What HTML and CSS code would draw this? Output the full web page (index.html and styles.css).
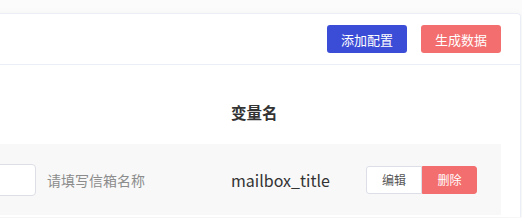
FILE: index.html
```html
<!DOCTYPE html>
<html lang="zh-CN">
  <head>
    <meta charset="UTF-8" />
    <meta name="viewport" content="width=device-width, initial-scale=1.0" />
    <title>变量配置</title>
    <link rel="stylesheet" href="styles.css">
  </head>
  <body>
    <div class="card">
      <div class="card-header">
        <button class="btn primary">添加配置</button>
        <button class="btn danger">生成数据</button>
      </div>
      <div class="card-body">
        <div class="row head">
          <div class="cell col-value"></div>
          <div class="cell col-name">变量名</div>
          <div class="cell col-ops"></div>
        </div>
        <div class="row item">
          <div class="cell col-value">
            <input type="text" class="input" />
            <span class="hint">请填写信箱名称</span>
          </div>
          <div class="cell col-name">mailbox_title</div>
          <div class="cell col-ops">
            <div class="btn-group">
              <button class="small">编辑</button>
              <button class="small remove">删除</button>
            </div>
          </div>
        </div>
      </div>
    </div>
  </body>
</html>
```

FILE: styles.css
```css
html,
body {
  height: 100%;
}
body {
  margin: 0;
  background-color: #fbfbfc;
  font-family: "Noto Sans CJK SC", "Noto Sans", sans-serif;
  color: #333;
  overflow: hidden;
}
.card {
  margin: 13px 1px 0 -200px;
  background-color: #fff;
  border: 1px solid #ebeef5;
  border-bottom: none;
  border-radius: 4px 4px 0 0;
  box-shadow: 0 2px 12px rgba(0, 0, 0, 0.04);
  height: calc(100% - 14px);
  box-sizing: border-box;
}
.card-header {
  display: flex;
  justify-content: flex-end;
  align-items: center;
  gap: 14px;
  height: 50px;
  padding: 0 19px;
  border-bottom: 1px solid #ebeef5;
}
.btn {
  width: 80px;
  height: 28px;
  border: none;
  border-radius: 3px;
  color: #fff;
  font-family: inherit;
  font-size: 13px;
  cursor: pointer;
}
.btn.primary {
  background-color: #3b4dd6;
}
.btn.danger {
  background-color: #f36e6e;
}
.card-body {
  padding: 20px 19px 0 20px;
}
.row {
  display: flex;
  align-items: center;
}
.row.head {
  font-weight: bold;
  line-height: 22px;
  padding: 16px 0 21px;
}
.row.item {
  height: 71px;
  background-color: #f8f8f8;
}
.col-value {
  width: 410px;
  display: flex;
  align-items: center;
  gap: 11px;
  padding-left: 15px;
  box-sizing: border-box;
}
.col-name {
  width: 135px;
  font-size: 16px;
}
.row.head .col-name {
  font-size: 15.5px;
}
.input {
  width: 200px;
  height: 32px;
  box-sizing: border-box;
  border: 1px solid #dcdfe6;
  border-radius: 4px;
  background-color: #fff;
}
.hint {
  font-size: 14px;
  color: #8c8c8c;
}
.btn-group {
  display: flex;
}
.small {
  width: 56px;
  height: 28px;
  font-family: inherit;
  font-size: 12px;
  border: 1px solid #dcdfe6;
  background-color: #fff;
  color: #555;
  border-radius: 3px 0 0 3px;
  cursor: pointer;
}
.small.remove {
  width: 55px;
  border-color: #f36e6e;
  background-color: #f36e6e;
  color: #fff;
  border-radius: 0 3px 3px 0;
}
```
